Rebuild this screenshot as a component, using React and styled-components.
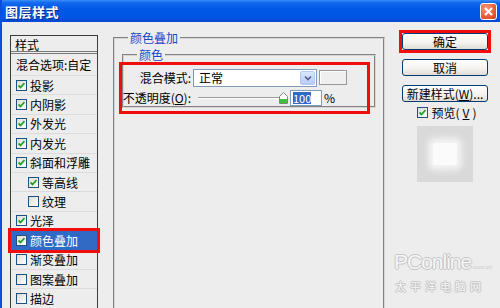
import React from "react";
import styled, { createGlobalStyle } from "styled-components";

const GlobalStyle = createGlobalStyle`
  html, body {
    margin: 0;
    padding: 0;
    background: #ececec;
  }
  * {
    box-sizing: border-box;
  }
`;

const Window = styled.div`
  position: relative;
  width: 500px;
  height: 308px;
  overflow: hidden;
  background: #ededed;
  border-left: 2px solid #0a4fd8;
  font-family: "Noto Sans CJK SC", "Noto Sans", sans-serif;
  font-size: 12px;
  color: #000;
`;

const TitleBar = styled.div`
  height: 22px;
  margin-left: -2px;
  display: flex;
  align-items: center;
  justify-content: space-between;
  padding: 0 3px 0 5px;
  background: linear-gradient(
    #3a8cf6 0%,
    #1469ee 12%,
    #0058e6 40%,
    #0056e3 80%,
    #0047cf 100%
  );
`;

const Title = styled.span`
  color: #fff;
  font-weight: 700;
  font-size: 13px;
  letter-spacing: 0.5px;
  text-shadow: 1px 1px 0 #0a2a8a;
`;

const CloseButton = styled.div`
  width: 17px;
  height: 17px;
  border: 1px solid #fff;
  border-radius: 3px;
  background: radial-gradient(circle at 35% 30%, #f49a7c, #e1542e 70%, #c93f1c);
  display: flex;
  align-items: center;
  justify-content: center;
`;

const Body = styled.div`
  display: flex;
  align-items: flex-start;
`;

/* left style list */
const StyleList = styled.div`
  margin: 13px 0 0 8px;
  width: 88px;
  height: 290px;
  border: 1px solid #3c3c3c;
  display: flex;
  flex-direction: column;
`;

const ListHeader = styled.div`
  height: 18px;
  padding-left: 4px;
  line-height: 18px;
  border-bottom: 3px double #7a7a7a;
`;

const ListItem = styled.div`
  position: relative;
  height: ${(p) => (p.$tall ? 22 : 19.4)}px;
  display: flex;
  align-items: center;
  gap: 3px;
  padding-left: ${(p) => (p.$indent ? 17 : 5)}px;
  border-bottom: 1px solid #dcdcdc;
  background: ${(p) => (p.$selected ? "#316ac5" : "transparent")};
  color: ${(p) => (p.$selected ? "#fff" : "#000")};
  white-space: nowrap;
`;

const SelectMark = styled.div`
  position: absolute;
  left: -3px;
  right: -3px;
  top: -3px;
  bottom: -3px;
  border: 3px solid #f20d0d;
`;

const Box = styled.span`
  width: 11px;
  height: 11px;
  flex: none;
  border: 1px solid #1c5180;
  background: linear-gradient(135deg, #dcdcd7, #fff);
  display: inline-flex;
  align-items: center;
  justify-content: center;
`;

const Check = ({ on }) => (
  <Box>
    {on && (
      <svg width="7" height="7" viewBox="0 0 7 7">
        <path d="M0.5 3.5 L2.5 5.5 L6.5 1" stroke="#21a121" strokeWidth="1.8" fill="none" />
      </svg>
    )}
  </Box>
);

/* middle group */
const Group = styled.fieldset`
  margin: 0;
  padding: 0;
  border: 2px groove #d6d6d6;
  min-width: 0;
`;

const Legend = styled.legend`
  margin-left: ${(p) => p.$offset}px;
  padding: 0 2px;
  line-height: 14px;
  color: #1448c8;
`;

const OuterGroup = styled(Group)`
  margin: 9px 0 0 15px;
  width: 272px;
  height: 300px;
`;

const InnerGroup = styled(Group)`
  margin: 3px 7px 0 7px;
  height: 60px;
`;

const Highlight = styled.div`
  margin: 0 0 0 -5px;
  width: 251px;
  height: 52px;
  border: 3px solid #f20d0d;
  display: grid;
  grid-template-columns: 69px auto;
  grid-auto-rows: 19px;
  column-gap: 2px;
  row-gap: 1px;
  align-items: center;
  padding-top: 3px;
`;

const FieldLabel = styled.span`
  text-align: right;
  white-space: nowrap;
  u {
    text-decoration: underline;
  }
`;

const FieldRow = styled.div`
  display: flex;
  align-items: center;
  gap: 2px;
`;

const Select = styled.div`
  width: 124px;
  height: 18px;
  border: 1px solid #7f9db9;
  background: #fff;
  display: flex;
  align-items: center;
  justify-content: space-between;
  padding: 0 1px 0 5px;
`;

const DropButton = styled.div`
  width: 15px;
  height: 14px;
  border-radius: 2px;
  background: linear-gradient(#dbe6fd, #b6cbf7);
  border: 1px solid #b6c8f2;
  display: flex;
  align-items: center;
  justify-content: center;
`;

const Swatch = styled.div`
  width: 28px;
  height: 15px;
  border: 1px solid #999;
  box-shadow: inset 1px 1px 0 #fff;
  background: #efefef;
`;

const Slider = styled.div`
  position: relative;
  width: 90px;
  height: 16px;
  margin-left: 5px;
  display: flex;
  align-items: center;
`;

const Track = styled.div`
  width: 100%;
  height: 2px;
  border-top: 1px solid #9a9a9a;
  border-bottom: 1px solid #fff;
`;

const Thumb = styled.svg`
  position: absolute;
  right: 0;
  top: 2px;
`;

const NumberInput = styled.div`
  width: 32px;
  height: 16px;
  border: 1px solid #7f9db9;
  background: #fff;
  padding: 1px 2px;
  display: flex;
  align-items: center;
`;

const Selected = styled.span`
  background: #316ac5;
  color: #fff;
  line-height: 12px;
  font-size: 11px;
`;

/* right column */
const Actions = styled.div`
  margin: 8px 0 0 14px;
  display: flex;
  flex-direction: column;
  align-items: center;
  width: 92px;
`;

const ButtonWrap = styled.div`
  padding: 3px;
  border: ${(p) => (p.$marked ? "3px solid #f20d0d" : "3px solid transparent")};
  margin-bottom: 3px;
`;

const Button = styled.div`
  width: 86px;
  height: 17px;
  border: 1px solid #003c74;
  border-radius: 3px;
  background: linear-gradient(#ffffff, #f3f2ee 60%, #dedbd2);
  display: flex;
  align-items: center;
  justify-content: center;
  line-height: 15px;
  margin: -3px;
  u {
    text-decoration: underline;
  }
`;

const PreviewToggle = styled.div`
  display: flex;
  align-items: center;
  gap: 3px;
  margin: -4px 0 0 4px;
  u {
    text-decoration: underline;
  }
`;

const PreviewBox = styled.div`
  margin-top: 5px;
  width: 56px;
  height: 56px;
  background: #d9d9d9;
  display: flex;
  align-items: center;
  justify-content: center;
`;

const PreviewGlow = styled.div`
  width: 24px;
  height: 22px;
  background: #fbfbfb;
  border-radius: 2px;
  box-shadow: 0 0 6px 5px #f4f4f4;
`;

const Watermark = styled.div`
  position: absolute;
  left: 392px;
  bottom: 15px;
  color: #f6f6f6;
  text-shadow: 1px 0 0 #c4c4c4, -1px 0 0 #c4c4c4, 0 1px 0 #c4c4c4, 0 -1px 0 #c4c4c4;
  font-family: "Liberation Sans", Arial, sans-serif;
  display: flex;
  flex-direction: column;
  align-items: flex-start;
`;

const Brand = styled.div`
  font-size: 21px;
  line-height: 24px;
  letter-spacing: -1px;
  white-space: nowrap;
  span {
    font-size: 6px;
    letter-spacing: 0;
    text-shadow: none;
    color: #c8c8c8;
  }
`;

const BrandCn = styled.div`
  font-family: "Noto Sans CJK SC", sans-serif;
  font-size: 11px;
  letter-spacing: 4px;
  line-height: 14px;
  margin-left: 1px;
`;

const styles = [
  { name: "投影", on: true },
  { name: "内阴影", on: true },
  { name: "外发光", on: true },
  { name: "内发光", on: true },
  { name: "斜面和浮雕", on: true },
  { name: "等高线", on: true, indent: true },
  { name: "纹理", on: false, indent: true },
  { name: "光泽", on: true },
  { name: "颜色叠加", on: true, selected: true },
  { name: "渐变叠加", on: false },
  { name: "图案叠加", on: false },
  { name: "描边", on: false },
];

export default function App() {
  return (
    <>
      <GlobalStyle />
      <Window>
        <TitleBar>
          <Title>图层样式</Title>
          <CloseButton>
            <svg width="9" height="9" viewBox="0 0 9 9">
              <path d="M1 1 L8 8 M8 1 L1 8" stroke="#fff" strokeWidth="2" />
            </svg>
          </CloseButton>
        </TitleBar>
        <Body>
          <StyleList>
            <ListHeader>样式</ListHeader>
            <ListItem $tall>混合选项:自定</ListItem>
            {styles.map((s) => (
              <ListItem key={s.name} $indent={s.indent} $selected={s.selected}>
                <Check on={s.on} />
                {s.name}
                {s.selected && <SelectMark />}
              </ListItem>
            ))}
          </StyleList>

          <OuterGroup>
            <Legend $offset={13}>颜色叠加</Legend>
            <InnerGroup>
              <Legend $offset={13}>颜色</Legend>
              <Highlight>
                <FieldLabel>混合模式:</FieldLabel>
                <FieldRow>
                  <Select>
                    正常
                    <DropButton>
                      <svg width="8" height="6" viewBox="0 0 8 6">
                        <path d="M1 1.5 L4 4.5 L7 1.5" stroke="#4d6185" strokeWidth="1.6" fill="none" />
                      </svg>
                    </DropButton>
                  </Select>
                  <Swatch />
                </FieldRow>
                <FieldLabel>
                  不透明度(<u>O</u>):
                </FieldLabel>
                <FieldRow>
                  <Slider>
                    <Track />
                    <Thumb width="9" height="12" viewBox="0 0 9 12">
                      <path d="M0.5 11.5 V4.5 L4.5 0.5 L8.5 4.5 V11.5 Z" fill="#fff" stroke="#7a8a7a" />
                      <rect x="1" y="7" width="7" height="4" fill="#3fbf3f" />
                    </Thumb>
                  </Slider>
                  <NumberInput>
                    <Selected>100</Selected>
                  </NumberInput>
                  <span>%</span>
                </FieldRow>
              </Highlight>
            </InnerGroup>
          </OuterGroup>

          <Actions>
            <ButtonWrap $marked>
              <Button>确定</Button>
            </ButtonWrap>
            <ButtonWrap>
              <Button>取消</Button>
            </ButtonWrap>
            <ButtonWrap>
              <Button>
                新建样式(<u>W</u>)...
              </Button>
            </ButtonWrap>
            <PreviewToggle>
              <Check on />
              预览(<u>V</u>)
            </PreviewToggle>
            <PreviewBox>
              <PreviewGlow />
            </PreviewBox>
          </Actions>
        </Body>
        <Watermark>
          <Brand>
            PConline<span>.com.cn</span>
          </Brand>
          <BrandCn>太平洋电脑网</BrandCn>
        </Watermark>
      </Window>
    </>
  );
}
